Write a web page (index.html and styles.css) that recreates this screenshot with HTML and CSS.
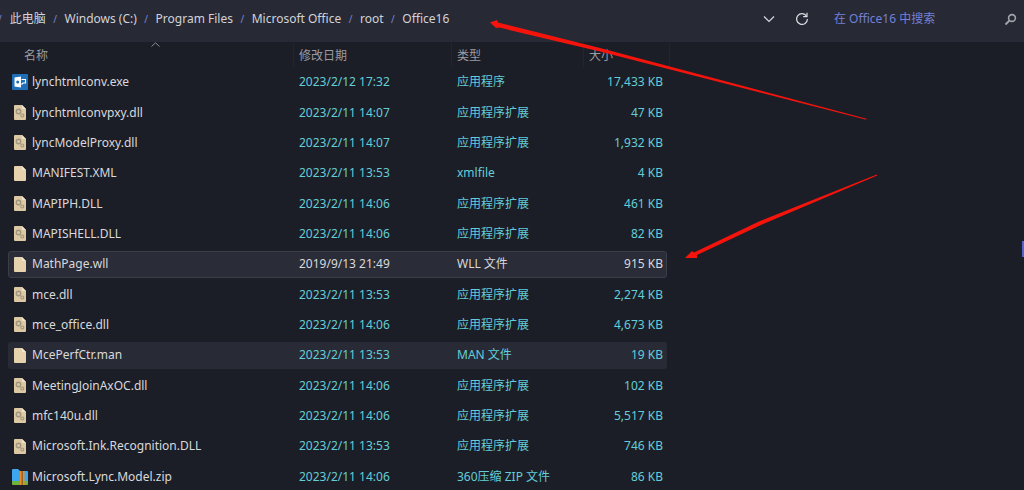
FILE: index.html
```html
<!DOCTYPE html>
<html lang="zh-CN">
<head>
<meta charset="utf-8">
<title>Office16</title>
<link rel="stylesheet" href="styles.css">
</head>
<body>
<svg class="defs" width="0" height="0" aria-hidden="true">
  <symbol id="doc" viewBox="0 0 12 15">
    <path d="M1 0H8L12 4V14a1 1 0 0 1-1 1H1a1 1 0 0 1-1-1V1a1 1 0 0 1 1-1Z" fill="#e6d3ad"/>
    <path d="M8 0V3a1 1 0 0 0 1 1H12Z" fill="#f4e8cf"/>
  </symbol>
  <symbol id="dll" viewBox="0 0 12 15">
    <path d="M1 0H8L12 4V14a1 1 0 0 1-1 1H1a1 1 0 0 1-1-1V1a1 1 0 0 1 1-1Z" fill="#dcc9a4"/>
    <path d="M8 0V3a1 1 0 0 0 1 1H12Z" fill="#efe3cb"/>
    <circle cx="4.5" cy="6.5" r="2.2" fill="none" stroke="#a0957f" stroke-width="1.4"/>
    <circle cx="8.3" cy="10.5" r="1.5" fill="none" stroke="#a0957f" stroke-width="1.1"/>
  </symbol>
</svg>

<header class="toolbar">
  <nav class="crumbs">
    <span class="sep first">/</span><span>此电脑</span><span class="sep">/</span><span>Windows (C:)</span><span class="sep">/</span><span>Program Files</span><span class="sep">/</span><span>Microsoft Office</span><span class="sep">/</span><span>root</span><span class="sep">/</span><span>Office16</span>
  </nav>
  <div class="tools">
    <svg class="chev" width="12" height="8" viewBox="0 0 12 8"><path d="M1 1.5 6 6.5 11 1.5" fill="none" stroke="#d8d9de" stroke-width="1.2"/></svg>
    <svg class="refresh" width="14" height="14" viewBox="0 0 14 14"><path d="M11.6 4.2A5.4 5.4 0 1 0 12.4 7" fill="none" stroke="#dcdde2" stroke-width="1.2"/><path d="M12 0.8V4.6H8.2" fill="none" stroke="#dcdde2" stroke-width="1.2"/></svg>
    <span class="search">在 Office16 中搜索</span>
    <svg class="mag" width="13" height="13" viewBox="0 0 13 13"><circle cx="8" cy="5" r="3.4" fill="none" stroke="#a3a4aa" stroke-width="1.6"/><path d="M5.6 7.4 1.5 11.5" stroke="#a3a4aa" stroke-width="2"/></svg>
  </div>
</header>

<main class="list">
  <div class="head">
    <svg class="sort" width="9" height="5" viewBox="0 0 9 5"><path d="M.5 4.5 4.5 .8 8.5 4.5" fill="none" stroke="#8a8b92"/></svg>
    <span class="h-name">名称</span><span class="h-date">修改日期</span><span class="h-type">类型</span><span class="h-size">大小</span>
  </div>
  <div class="rows">
    <div class="row"><svg class="ico wide" viewBox="0 0 16 16"><rect width="16" height="16" rx="1" fill="#1f6fb8"/><path d="M2.5 3.5 9 2.5V13.5L2.5 12.5Z" fill="#fff"/><circle cx="5.7" cy="8" r="1.5" fill="#1f6fb8"/><path d="M9.5 5.5h4v3.5h-2.5l-1.5 1.5" fill="none" stroke="#fff" stroke-width="1.1"/></svg><span class="name">lynchtmlconv.exe</span><span class="date">2023/2/12 17:32</span><span class="type">应用程序</span><span class="size">17,433 KB</span></div>
    <div class="row"><svg class="ico doc"><use href="#dll"/></svg><span class="name">lynchtmlconvpxy.dll</span><span class="date">2023/2/11 14:07</span><span class="type">应用程序扩展</span><span class="size">47 KB</span></div>
    <div class="row"><svg class="ico doc"><use href="#dll"/></svg><span class="name">lyncModelProxy.dll</span><span class="date">2023/2/11 14:07</span><span class="type">应用程序扩展</span><span class="size">1,932 KB</span></div>
    <div class="row"><svg class="ico doc"><use href="#doc"/></svg><span class="name">MANIFEST.XML</span><span class="date">2023/2/11 13:53</span><span class="type">xmlfile</span><span class="size">4 KB</span></div>
    <div class="row"><svg class="ico doc"><use href="#dll"/></svg><span class="name">MAPIPH.DLL</span><span class="date">2023/2/11 14:06</span><span class="type">应用程序扩展</span><span class="size">461 KB</span></div>
    <div class="row"><svg class="ico doc"><use href="#dll"/></svg><span class="name">MAPISHELL.DLL</span><span class="date">2023/2/11 14:06</span><span class="type">应用程序扩展</span><span class="size">82 KB</span></div>
    <div class="row selected"><svg class="ico doc"><use href="#doc"/></svg><span class="name">MathPage.wll</span><span class="date">2019/9/13 21:49</span><span class="type">WLL 文件</span><span class="size">915 KB</span></div>
    <div class="row"><svg class="ico doc"><use href="#dll"/></svg><span class="name">mce.dll</span><span class="date">2023/2/11 13:53</span><span class="type">应用程序扩展</span><span class="size">2,274 KB</span></div>
    <div class="row"><svg class="ico doc"><use href="#dll"/></svg><span class="name">mce_office.dll</span><span class="date">2023/2/11 14:06</span><span class="type">应用程序扩展</span><span class="size">4,673 KB</span></div>
    <div class="row hover"><svg class="ico doc"><use href="#doc"/></svg><span class="name">McePerfCtr.man</span><span class="date">2023/2/11 13:53</span><span class="type">MAN 文件</span><span class="size">19 KB</span></div>
    <div class="row"><svg class="ico doc"><use href="#dll"/></svg><span class="name">MeetingJoinAxOC.dll</span><span class="date">2023/2/11 14:06</span><span class="type">应用程序扩展</span><span class="size">102 KB</span></div>
    <div class="row"><svg class="ico doc"><use href="#dll"/></svg><span class="name">mfc140u.dll</span><span class="date">2023/2/11 14:06</span><span class="type">应用程序扩展</span><span class="size">5,517 KB</span></div>
    <div class="row"><svg class="ico doc"><use href="#dll"/></svg><span class="name">Microsoft.Ink.Recognition.DLL</span><span class="date">2023/2/11 13:53</span><span class="type">应用程序扩展</span><span class="size">746 KB</span></div>
    <div class="row"><svg class="ico wide" viewBox="0 0 16 16"><path d="M0 1a1 1 0 0 1 1-1h5l2 2h7a1 1 0 0 1 1 1v10H0Z" fill="#3ea6ee"/><path d="M0 12h16v3a1 1 0 0 1-1 1H1a1 1 0 0 1-1-1Z" fill="#6fb23c"/><rect x="8" y="2" width="4.5" height="14" fill="#e58e2a"/><rect x="9.5" y="2" width="1.5" height="14" fill="#9a6226"/></svg><span class="name">Microsoft.Lync.Model.zip</span><span class="date">2023/2/11 14:06</span><span class="type">360压缩 ZIP 文件</span><span class="size">86 KB</span></div>
  </div>
</main>

<div class="scroll-mark"></div>

<svg class="arrows" width="1024" height="490" viewBox="0 0 1024 490" aria-hidden="true">
  <path d="M490 22.5 497 20 498 22.5 600 48 866.5 118.7 866.3 119.7 600 51.5 499 27.5 496 28Z" fill="#f5140c"/>
  <path d="M685 258 692 251 694 252.5 760 221 876.8 174.6 877.2 175.4 762 224.5 697 255 697 258Z" fill="#f5140c"/>
</svg>
</body>
</html>
```
FILE: styles.css
```css
* { box-sizing: border-box; }
html, body { margin: 0; height: 490px; overflow: hidden; }
body {
  position: relative;
  background: #1c1e27;
  color: #e4e4e6;
  font: 12px/16px "Noto Sans", "Noto Sans CJK SC", sans-serif;
}
.defs { position: absolute; }

.toolbar {
  height: 42px;
  background: #272935;
  display: flex;
  align-items: center;
  justify-content: space-between;
  padding-bottom: 4px;
}
.crumbs { display: flex; align-items: center; color: #d2d3d8; }
.sep { color: #7d84d8; font-size: 10px; margin: 0 7.5px; }
.sep.first { margin: 0 8px 0 -2px; }
.tools { display: flex; align-items: center; }
.chev { margin-right: 20px; }
.refresh { margin-right: 25px; }
.search { color: #7480d6; width: 170px; }
.mag { margin-right: 7px; }

.list { position: relative; }
.head {
  position: relative;
  height: 25px;
  display: flex;
  align-items: center;
  color: #9a9ba1;
}
.head > span { height: 25px; line-height: 27px; border-left: 1px solid #23252e; padding-left: 5px; }
.sort { position: absolute; left: 151px; top: 0; }
.head > .h-name { width: 293px; padding-left: 24px; border-left: 0; }
.head > .h-date { width: 158px; }
.head > .h-type { width: 132px; }
.head > .h-size { width: 87px; border-right: 1px solid #23252e; }

.rows {
  margin-left: 8px;
  width: 659px;
  padding-top: 1.8px;
  display: grid;
  grid-auto-rows: 27px;
  row-gap: 3.33px;
}
.row {
  display: flex;
  align-items: center;
  border: 1px solid transparent;
  border-radius: 3px;
  padding-left: 5px;
  color: #d8d9dd;
}
.row.selected { background: #2a2c37; border-color: #3b3d48; }
.row.hover { background: #282a35; }
.ico { flex: none; width: 16px; height: 16px; margin: 0 4px 0 -2px; }
.doc { width: 12px; height: 15px; margin: 0 6px 0 0; }
.name { width: 267px; white-space: nowrap; }
.date { width: 158px; color: #63cdd8; }
.type { width: 118px; color: #63cdd8; white-space: nowrap; }
.size { width: 88px; color: #63cdd8; text-align: right; white-space: nowrap; }
.selected .date, .selected .type, .selected .size { color: #d8d9dd; }

.scroll-mark {
  position: absolute;
  right: 0;
  top: 241px;
  width: 2px;
  height: 16px;
  background: #5564cc;
}
.arrows { position: absolute; left: 0; top: 0; pointer-events: none; }
```
